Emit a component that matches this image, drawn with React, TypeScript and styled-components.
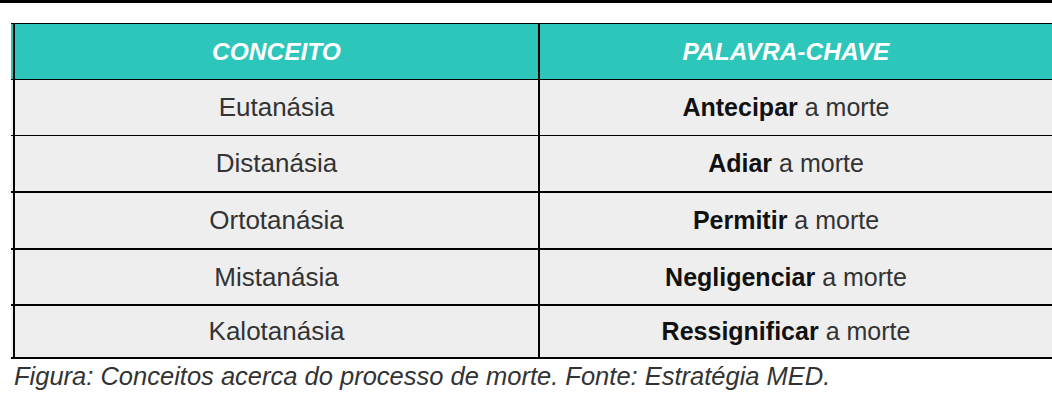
import React from 'react';
import styled, { createGlobalStyle } from 'styled-components';

const GlobalStyle = createGlobalStyle`
  html, body {
    margin: 0;
    padding: 0;
    background: #ffffff;
  }
  body {
    font-family: 'Liberation Sans', Arial, sans-serif;
    width: 1052px;
    height: 402px;
    overflow: hidden;
  }
`;

const Page = styled.div`
  display: flex;
  flex-direction: column;
  width: 1052px;
`;

const TopBar = styled.div`
  height: 3px;
  background: #000;
  margin-bottom: 20px;
`;

const Table = styled.div`
  display: flex;
  flex-direction: column;
  margin-left: 11px;
`;

const Row = styled.div<{ $head?: boolean; $line: number; $height: number }>`
  display: grid;
  grid-template-columns: 525px 1fr;
  height: ${({ $height }) => $height}px;
  padding-left: 2px;
  background: ${({ $head }) => ($head ? '#2dc6bb' : '#eeeeee')};
  border-bottom: ${({ $line }) => $line}px solid #000;
  ${({ $head }) => ($head ? 'border-top: 1px solid #000;' : '')}
`;

const Cell = styled.div<{ $head?: boolean; $right?: boolean }>`
  display: flex;
  align-items: center;
  justify-content: center;
  border-left: 2px solid #000;
  padding-right: ${({ $right }) => ($right ? '20px' : '0')};
  font-size: ${({ $head, $right }) => ($head ? '24.5px' : $right ? '25px' : '26px')};
  font-weight: ${({ $head }) => ($head ? 700 : 400)};
  font-style: ${({ $head }) => ($head ? 'italic' : 'normal')};
  color: ${({ $head }) => ($head ? '#ffffff' : '#333333')};
  white-space: nowrap;
`;

const Key = styled.b`
  font-weight: 700;
  color: #111111;
  margin-right: 7px;
`;

const Caption = styled.div`
  margin: 2px 0 0 14px;
  font-size: 25.5px;
  line-height: 30px;
  font-style: italic;
  color: #333333;
  white-space: nowrap;
`;

const rows = [
  { concept: 'Eutanásia', key: 'Antecipar', line: 1, height: 55 },
  { concept: 'Distanásia', key: 'Adiar', line: 2, height: 55 },
  { concept: 'Ortotanásia', key: 'Permitir', line: 2, height: 55 },
  { concept: 'Mistanásia', key: 'Negligenciar', line: 2, height: 54 },
  { concept: 'Kalotanásia', key: 'Ressignificar', line: 2, height: 51 },
];

export default function App() {
  return (
    <Page>
      <GlobalStyle />
      <TopBar />
      <Table>
        <Row $head $line={1} $height={55}>
          <Cell $head>CONCEITO</Cell>
          <Cell $head $right>PALAVRA-CHAVE</Cell>
        </Row>
        {rows.map((r) => (
          <Row key={r.concept} $line={r.line} $height={r.height}>
            <Cell>{r.concept}</Cell>
            <Cell $right>
              <Key>{r.key}</Key>a morte
            </Cell>
          </Row>
        ))}
      </Table>
      <Caption>Figura: Conceitos acerca do processo de morte. Fonte: Estratégia MED.</Caption>
    </Page>
  );
}
